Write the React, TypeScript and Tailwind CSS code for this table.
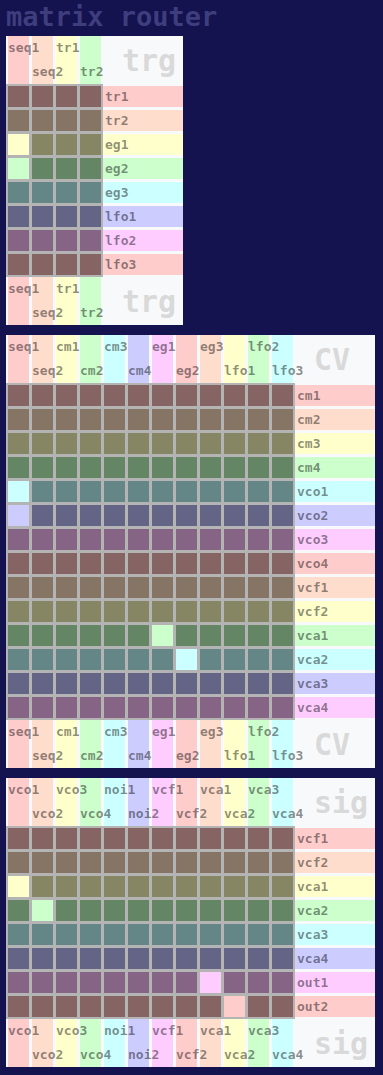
const PALETTE = [
  { light: "bg-[#ffcccc]", dark: "bg-[#866464]" },
  { light: "bg-[#ffddcc]", dark: "bg-[#867564]" },
  { light: "bg-[#ffffcc]", dark: "bg-[#868664]" },
  { light: "bg-[#ccffcc]", dark: "bg-[#648664]" },
  { light: "bg-[#ccffff]", dark: "bg-[#648686]" },
  { light: "bg-[#ccccff]", dark: "bg-[#646486]" },
  { light: "bg-[#ffccff]", dark: "bg-[#866486]" },
];

interface MatrixProps {
  name: string;
  cols: string[];
  rows: string[];
  active: [number, number][];
}

function ColumnHeader({ name, cols }: { name: string; cols: string[] }) {
  return (
    <div className="flex h-[48px]">
      <div className="flex gap-[3px] pl-[2px] pr-[2px]">
        {cols.map((c, i) => (
          <div
            key={c}
            className={`flex h-[48px] w-[21px] flex-col ${i % 2 ? "justify-end" : "justify-start"} ${PALETTE[i % 7].light}`}
          >
            {/* label spills over the next strip, keep it on top */}
            <span className="relative z-10 h-[24px] whitespace-nowrap text-[13px] leading-[24px] font-bold text-black/45">
              {c}
            </span>
          </div>
        ))}
      </div>
      <div className="flex w-[80px] items-center pl-[19px] text-[30px] font-bold text-[#d9d9d9]">{name}</div>
    </div>
  );
}

function Matrix({ name, cols, rows, active }: MatrixProps) {
  const isOn = (r: number, c: number) => active.some(([ar, ac]) => ar === r && ac === c);

  return (
    <div className="w-fit bg-[#f8f9fb]">
      <ColumnHeader name={name} cols={cols} />

      <div className="flex">
        {/* cells */}
        <div className="flex flex-col gap-[3px] bg-[#b4b4b4] p-[2px]">
          {rows.map((r, ri) => (
            <div key={r} className="flex gap-[3px]">
              {cols.map((c, ci) => (
                <div
                  key={c}
                  className={`h-[21px] w-[21px] ${isOn(ri, ci) ? PALETTE[ri % 7].light : PALETTE[ri % 7].dark}`}
                />
              ))}
            </div>
          ))}
        </div>

        {/* row labels */}
        <div className="flex flex-col gap-[3px] pt-[2px]">
          {rows.map((r, ri) => (
            <div
              key={r}
              className={`h-[21px] w-[80px] pl-[2px] text-[13px] leading-[21px] font-bold text-black/45 ${PALETTE[ri % 7].light}`}
            >
              {r}
            </div>
          ))}
        </div>
      </div>

      <ColumnHeader name={name} cols={cols} />
    </div>
  );
}

export default function App() {
  return (
    <div
      className="min-h-screen bg-[#14124f] px-[6px]"
      style={{ fontFamily: '"DejaVu Sans Mono", monospace' }}
    >
      <h1 className="h-[36px] text-[27px] leading-[34px] font-bold text-[#3e3d7d]">matrix router</h1>

      <div className="flex flex-col gap-[10px]">
        <Matrix
          name="trg"
          cols={["seq1", "seq2", "tr1", "tr2"]}
          rows={["tr1", "tr2", "eg1", "eg2", "eg3", "lfo1", "lfo2", "lfo3"]}
          active={[
            [2, 0],
            [3, 0],
          ]}
        />
        <Matrix
          name="CV"
          cols={["seq1", "seq2", "cm1", "cm2", "cm3", "cm4", "eg1", "eg2", "eg3", "lfo1", "lfo2", "lfo3"]}
          rows={["cm1", "cm2", "cm3", "cm4", "vco1", "vco2", "vco3", "vco4", "vcf1", "vcf2", "vca1", "vca2", "vca3", "vca4"]}
          active={[
            [4, 0],
            [5, 0],
            [10, 6],
            [11, 7],
          ]}
        />
        <Matrix
          name="sig"
          cols={["vco1", "vco2", "vco3", "vco4", "noi1", "noi2", "vcf1", "vcf2", "vca1", "vca2", "vca3", "vca4"]}
          rows={["vcf1", "vcf2", "vca1", "vca2", "vca3", "vca4", "out1", "out2"]}
          active={[
            [2, 0],
            [3, 1],
            [6, 8],
            [7, 9],
          ]}
        />
      </div>
    </div>
  );
}
